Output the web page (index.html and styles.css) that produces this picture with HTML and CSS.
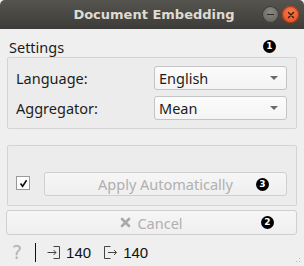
FILE: index.html
```html
<!DOCTYPE html>
<html lang="en">
<head>
    <meta charset="UTF-8">
    <title>Document Embedding</title>
    <link rel="stylesheet" href="styles.css">
</head>
<body>

<div class="window">
    <div class="titlebar">
        <span></span>
        <span class="title">Document Embedding</span>
        <div class="wm-buttons">
            <span class="wm-btn minimize"><span class="dash"></span></span>
            <span class="wm-btn close">
                <svg width="8" height="8" viewBox="0 0 8 8"><path d="M1.5 1.5 L6.5 6.5 M6.5 1.5 L1.5 6.5" stroke="#3a1a0a" stroke-width="1.4" stroke-linecap="round"/></svg>
            </span>
        </div>
    </div>

    <div class="content">
        <div class="section-head">
            <span class="section-title">Settings</span>
            <span class="badge">1</span>
        </div>

        <div class="group settings">
            <label>Language:</label>
            <div class="combo"><span>English</span><span class="arrow"></span></div>
            <label>Aggregator:</label>
            <div class="combo"><span>Mean</span><span class="arrow"></span></div>
        </div>

        <div class="group apply-box">
            <span class="checkbox">
                <svg width="11" height="11" viewBox="0 0 11 11"><path d="M2.5 5.5 L4.6 8.3 L8.6 2.3" fill="none" stroke="#111" stroke-width="1.6"/></svg>
            </span>
            <div class="button disabled apply">
                <span></span>
                <span class="btn-label">Apply Automatically</span>
                <span class="badge">3</span>
            </div>
        </div>

        <div class="button disabled cancel">
            <span></span>
            <span class="btn-label">
                <svg width="11" height="11" viewBox="0 0 11 11"><path d="M2 2 L9 9 M9 2 L2 9" stroke="#a9a9a9" stroke-width="2.6" stroke-linecap="round"/></svg>
                Cancel
            </span>
            <span class="badge">2</span>
        </div>
    </div>

    <div class="statusbar">
        <span class="help">?</span>
        <span class="divider"></span>
        <svg class="io-icon" width="13" height="13" viewBox="0 0 13 13"><path d="M6.5 0.5 H12.5 V12.5 H6.5" fill="none" stroke="#444" stroke-width="1"/><path d="M0.5 6.5 H9 M6.5 4 L9 6.5 L6.5 9" fill="none" stroke="#444" stroke-width="1"/></svg>
        <span class="count">140</span>
        <svg class="io-icon out" width="13" height="13" viewBox="0 0 13 13"><path d="M6.5 0.5 H0.5 V12.5 H6.5" fill="none" stroke="#444" stroke-width="1"/><path d="M4 6.5 H12.5 M10 4 L12.5 6.5 L10 9" fill="none" stroke="#444" stroke-width="1"/></svg>
        <span class="count">140</span>
        <span class="grip"></span>
    </div>
</div>

</body>
</html>
```

FILE: styles.css
```css
/* Basic window layout */
body {
    margin: 0;
    background: #efefef;
    font-family: "Noto Sans", "DejaVu Sans", sans-serif;
    font-size: 14.5px;
    color: #1c1c1c;
}

.window {
    width: 304px;
    height: 266px;
    display: flex;
    flex-direction: column;
    overflow: hidden;
}

/* Title bar */
.titlebar {
    height: 29px;
    flex: none;
    display: grid;
    grid-template-columns: 1fr auto 1fr;
    align-items: center;
    background: linear-gradient(#56544f, #3d3c38);
    border-radius: 5px 5px 0 0;
}

.title {
    color: #dfdbd2;
    font-family: "DejaVu Sans", sans-serif;
    font-weight: bold;
    font-size: 13px;
    padding-left: 4px;
}

.wm-buttons {
    display: flex;
    justify-content: flex-end;
    gap: 3px;
    padding-right: 5px;
}

.wm-btn {
    width: 17px;
    height: 17px;
    border-radius: 50%;
    display: flex;
    align-items: center;
    justify-content: center;
}

.minimize {
    background: radial-gradient(circle at 50% 35%, #8a8883, #5e5c57);
    box-shadow: inset 0 0 0 1px #3a3935;
}

.minimize .dash {
    width: 7px;
    height: 1px;
    background: #2c2b28;
}

.close {
    background: radial-gradient(circle at 50% 35%, #f47c4f, #e1491a);
    box-shadow: inset 0 0 0 1px #a63a12;
}

/* Main content */
.content {
    padding: 7px 7px 0 6px;
    display: flex;
    flex-direction: column;
}

.section-head {
    display: flex;
    justify-content: space-between;
    align-items: center;
    padding: 0 21px 0 3px;
    height: 21px;
}

.badge {
    width: 13px;
    height: 13px;
    border-radius: 50%;
    background: #000;
    color: #fff;
    font-family: "DejaVu Sans", sans-serif;
    font-weight: bold;
    font-size: 9px;
    line-height: 13px;
    text-align: center;
}

.group {
    border: 1px solid #d4d4d4;
    border-radius: 2px;
    background: #ececec;
    margin-left: 1px;
}

.settings {
    display: grid;
    grid-template-columns: 1fr 133px;
    row-gap: 6px;
    align-items: center;
    padding: 8px 9px 8px 8px;
}

.combo {
    height: 22px;
    border: 1px solid #c4c4c4;
    border-radius: 3px;
    background: linear-gradient(#fbfbfb, #f4f4f4);
    display: flex;
    align-items: center;
    justify-content: space-between;
    padding: 0 8px 0 4px;
}

.arrow {
    width: 0;
    height: 0;
    border-left: 4px solid transparent;
    border-right: 4px solid transparent;
    border-top: 4px solid #6a6a6a;
}

.apply-box {
    margin-top: 16px;
    height: 61px;
    box-sizing: border-box;
    display: flex;
    align-items: flex-end;
    gap: 14px;
    padding: 0 9px 9px 8px;
}

.checkbox {
    width: 12px;
    height: 12px;
    border: 1px solid #9a9a9a;
    background: #fff;
    display: flex;
    align-items: center;
    justify-content: center;
    margin-bottom: 6px;
}

.button {
    height: 22px;
    border: 1px solid #cfcfcf;
    border-radius: 3px;
    background: linear-gradient(#f6f6f6, #efefef);
    display: grid;
    grid-template-columns: 1fr auto 1fr;
    align-items: center;
}

.button .badge {
    justify-self: end;
}

.button.disabled {
    color: #b0b0b0;
}

.apply {
    flex: 1;
    padding: 0 17px;
}

.cancel {
    margin-top: 4px;
    height: 23px;
    padding: 0 22px;
}

.btn-label {
    display: flex;
    align-items: center;
    gap: 6px;
}

/* Status bar */
.statusbar {
    margin-top: auto;
    height: 23px;
    display: flex;
    align-items: center;
    padding: 0 2px 2px 12px;
    font-family: "Liberation Sans", sans-serif;
    font-size: 15px;
    color: #111;
}

.help {
    color: #b4b4b4;
    font-family: "DejaVu Sans", sans-serif;
    font-size: 19px;
    line-height: 19px;
}

.divider {
    width: 1px;
    height: 19px;
    background: #111;
    margin: 0 11px 0 13px;
}

.io-icon {
    margin-right: 6px;
}

.io-icon.out {
    margin-left: 13px;
}

.grip {
    margin-left: auto;
    align-self: flex-end;
    width: 10px;
    height: 10px;
    background-image: radial-gradient(circle, #b8b8b8 0.8px, transparent 1px);
    background-size: 3px 3px;
    clip-path: polygon(100% 0, 100% 100%, 0 100%);
}
```
